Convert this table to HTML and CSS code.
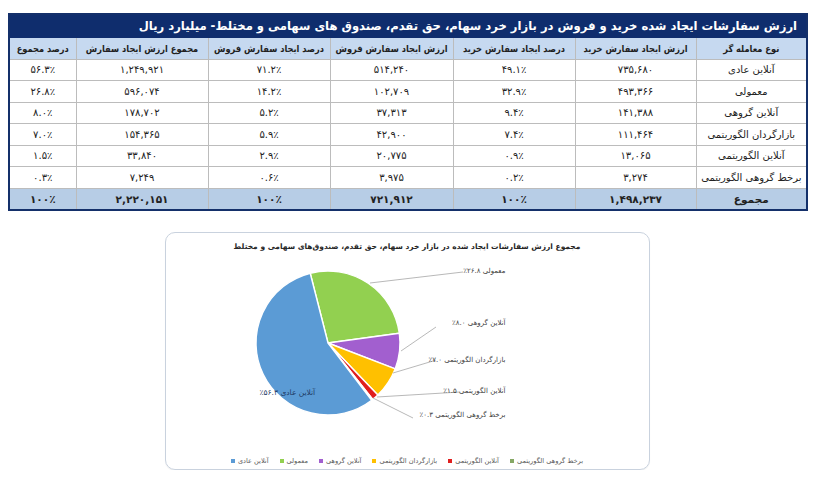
FILE: index.html
```html
<!DOCTYPE html>
<html lang="fa">
<head>
<meta charset="utf-8">
<title>ارزش سفارشات</title>
<link rel="stylesheet" href="styles.css">
</head>
<body>
<div class="page">
  <table class="tbl" dir="rtl">
    <colgroup>
      <col style="width:111px"><col style="width:121px"><col style="width:122px"><col style="width:123px"><col style="width:122px"><col style="width:132px"><col style="width:67px">
    </colgroup>
    <thead>
      <tr class="title-row"><th colspan="7">ارزش سفارشات ایجاد شده خرید و فروش در بازار خرد سهام، حق تقدم، صندوق های سهامی و مختلط- میلیارد ریال</th></tr>
      <tr class="head">
        <th>نوع معامله گر</th><th>ارزش ایجاد سفارش خرید</th><th>درصد ایجاد سفارش خرید</th><th>ارزش ایجاد سفارش فروش</th><th>درصد ایجاد سفارش فروش</th><th>مجموع ارزش ایجاد سفارش</th><th>درصد مجموع</th>
      </tr>
    </thead>
    <tbody>
      <tr><td>آنلاین عادی</td><td>۷۳۵,۶۸۰</td><td>۴۹.۱٪</td><td>۵۱۴,۲۴۰</td><td>۷۱.۲٪</td><td>۱,۲۴۹,۹۲۱</td><td>۵۶.۳٪</td></tr>
      <tr><td>معمولی</td><td>۴۹۳,۳۶۶</td><td>۳۲.۹٪</td><td>۱۰۲,۷۰۹</td><td>۱۴.۲٪</td><td>۵۹۶,۰۷۴</td><td>۲۶.۸٪</td></tr>
      <tr><td>آنلاین گروهی</td><td>۱۴۱,۳۸۸</td><td>۹.۴٪</td><td>۳۷,۳۱۳</td><td>۵.۲٪</td><td>۱۷۸,۷۰۲</td><td>۸.۰٪</td></tr>
      <tr><td>بازارگردان الگوریتمی</td><td>۱۱۱,۴۶۴</td><td>۷.۴٪</td><td>۴۲,۹۰۰</td><td>۵.۹٪</td><td>۱۵۴,۳۶۵</td><td>۷.۰٪</td></tr>
      <tr><td>آنلاین الگوریتمی</td><td>۱۳,۰۶۵</td><td>۰.۹٪</td><td>۲۰,۷۷۵</td><td>۲.۹٪</td><td>۳۳,۸۴۰</td><td>۱.۵٪</td></tr>
      <tr><td>برخط گروهی الگوریتمی</td><td>۳,۲۷۴</td><td>۰.۲٪</td><td>۳,۹۷۵</td><td>۰.۶٪</td><td>۷,۲۴۹</td><td>۰.۳٪</td></tr>
      <tr class="total"><td>مجموع</td><td>۱,۴۹۸,۲۳۷</td><td>۱۰۰٪</td><td>۷۲۱,۹۱۲</td><td>۱۰۰٪</td><td>۲,۲۲۰,۱۵۱</td><td>۱۰۰٪</td></tr>
    </tbody>
  </table>

  <div class="card">
    <div class="chart-title" dir="rtl">مجموع ارزش سفارشات ایجاد شده در بازار خرد سهام، حق تقدم، صندوق‌های سهامی و مختلط</div>
    <div class="plot">
      <svg class="pie" width="483" height="190" viewBox="0 0 483 190">
        <g stroke="#ffffff" stroke-width="1.4" stroke-linejoin="round">
          <path d="M162,87 L144.22,17.23 A72,72 0 0 1 233.33,77.20 Z" fill="#92d050"/>
          <path d="M162,87 L233.33,77.20 A72,72 0 0 1 229.23,112.78 Z" fill="#a25fcf"/>
          <path d="M162,87 L229.23,112.78 A72,72 0 0 1 211.83,138.97 Z" fill="#ffc000"/>
          <path d="M162,87 L211.83,138.97 A72,72 0 0 1 206.74,143.41 Z" fill="#e01f1f"/>
          <path d="M162,87 L206.74,143.41 A72,72 0 0 1 205.67,144.24 Z" fill="#86a865"/>
          <path d="M162,87 L205.67,144.24 A72,72 0 1 1 144.22,17.23 Z" fill="#5b9bd5"/>
        </g>
        <g stroke="#a6a6a6" stroke-width="0.8" fill="none">
          <polyline points="204,27 297,16"/>
          <polyline points="235,95 270,71"/>
          <polyline points="227,117 267,105 270,105"/>
          <polyline points="211,141 294,136"/>
          <polyline points="207,142 247,162"/>
        </g>
      </svg>
      <span class="lbl l1" dir="rtl">معمولی ۲۶.۸٪</span>
      <span class="lbl l2" dir="rtl">آنلاین گروهی ۸.۰٪</span>
      <span class="lbl l3" dir="rtl">بازارگردان الگوریتمی ۷.۰٪</span>
      <span class="lbl l4" dir="rtl">آنلاین الگوریتمی ۱.۵٪</span>
      <span class="lbl l5" dir="rtl">برخط گروهی الگوریتمی ۰.۳٪</span>
      <span class="lbl l6" dir="rtl">آنلاین عادی ۵۶.۳٪</span>
    </div>
    <div class="legend" dir="rtl">
      <span class="item"><span>برخط گروهی الگوریتمی</span><i class="mk mk-olive"></i></span>
      <span class="item"><span>آنلاین الگوریتمی</span><i class="mk mk-red"></i></span>
      <span class="item"><span>بازارگردان الگوریتمی</span><i class="mk mk-yellow"></i></span>
      <span class="item"><span>آنلاین گروهی</span><i class="mk mk-purple"></i></span>
      <span class="item"><span>معمولی</span><i class="mk mk-green"></i></span>
      <span class="item"><span>آنلاین عادی</span><i class="mk mk-blue"></i></span>
    </div>
  </div>
</div>
</body>
</html>
```

FILE: styles.css
```css
html, body {
  margin: 0;
  padding: 0;
  background: #ffffff;
}
body {
  font-family: "DejaVu Sans", "Noto Sans", sans-serif;
  color: #1a1a1a;
}
.page {
  padding: 13px 9px 0 8px;
}
.tbl {
  width: 798px;
  border-collapse: collapse;
  table-layout: fixed;
  border: 2px solid #14306a;
  direction: rtl;
}
.tbl th, .tbl td {
  border: 1px solid #bcbcbc;
  text-align: center;
  padding: 0;
  white-space: nowrap;
  overflow: hidden;
}
.title-row th {
  background: #0f2d6d;
  color: #ffffff;
  text-align: right;
  padding-right: 9px;
  height: 22px;
  font-size: 11.6px;
  font-weight: bold;
  border-color: #0f2d6d;
}
.head th {
  background: #c6d9f0;
  font-family: "DejaVu Sans Condensed", "DejaVu Sans", sans-serif;
  font-size: 9.2px;
  font-weight: bold;
  color: #1f1f1f;
  height: 20.5px;
}
.tbl tbody td {
  font-size: 10px;
  height: 20.5px;
  color: #222222;
}
.tbl tbody tr.total td {
  background: #b7cde6;
  font-weight: bold;
  font-size: 10.5px;
}
.card {
  width: 483px;
  height: 236px;
  margin: 21px auto 0;
  border: 1px solid #c9d2de;
  border-radius: 10px;
  box-shadow: 0 1px 1px rgba(0,0,0,0.06);
}
.chart-title {
  padding: 8px 0 3px;
  line-height: 12px;
  height: 12px;
  text-align: center;
  font-size: 7.5px;
  font-weight: bold;
  color: #262626;
  white-space: nowrap;
}
.plot {
  position: relative;
  height: 190px;
}
.pie {
  display: block;
}
.lbl {
  position: absolute;
  right: 143px;
  font-size: 7px;
  line-height: 10px;
  color: #404040;
  white-space: nowrap;
}
.l1 { top: 10px; }
.l2 { top: 62px; }
.l3 { top: 99px; }
.l4 { top: 130px; }
.l5 { top: 154px; }
.l6 { right: auto; left: 94px; top: 132px; color: #1f3c66; font-size: 7.5px; }
.legend {
  display: flex;
  justify-content: center;
  align-items: center;
  gap: 11px;
  padding: 10px 0 3px;
  line-height: 10px;
  height: 10px;
  font-size: 6.6px;
  color: #595959;
}
.item {
  display: flex;
  align-items: center;
  gap: 3px;
  white-space: nowrap;
}
.mk {
  display: inline-block;
  width: 4px;
  height: 4px;
}
.mk-blue { background: #5b9bd5; }
.mk-green { background: #92d050; }
.mk-purple { background: #a25fcf; }
.mk-yellow { background: #ffc000; }
.mk-red { background: #e01f1f; }
.mk-olive { background: #86a865; }
```
